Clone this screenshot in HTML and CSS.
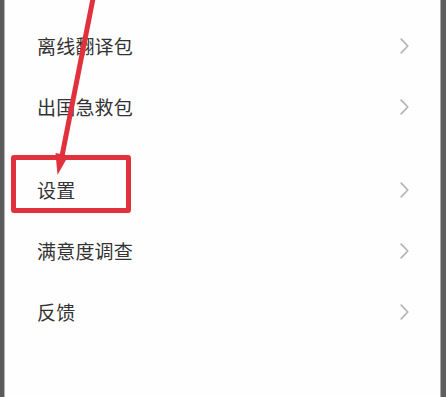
FILE: index.html
```html
<!DOCTYPE html>
<html lang="zh">
<head>
<meta charset="utf-8">
<link rel="stylesheet" href="styles.css">
</head>
<body>
<div class="screen">
  <div class="edge edge-left"></div>
  <main class="menu">
    <ul class="group">
      <li class="row"><span class="label">离线翻译包</span><svg class="chev" viewBox="0 0 9 16"><polyline points="1.2,1.2 7.8,8 1.2,14.8"/></svg></li>
      <li class="row"><span class="label">出国急救包</span><svg class="chev" viewBox="0 0 9 16"><polyline points="1.2,1.2 7.8,8 1.2,14.8"/></svg></li>
    </ul>
    <ul class="group">
      <li class="row"><span class="label">设置</span><svg class="chev" viewBox="0 0 9 16"><polyline points="1.2,1.2 7.8,8 1.2,14.8"/></svg></li>
      <li class="row"><span class="label">满意度调查</span><svg class="chev" viewBox="0 0 9 16"><polyline points="1.2,1.2 7.8,8 1.2,14.8"/></svg></li>
      <li class="row"><span class="label">反馈</span><svg class="chev" viewBox="0 0 9 16"><polyline points="1.2,1.2 7.8,8 1.2,14.8"/></svg></li>
    </ul>
  </main>
  <div class="edge edge-right"></div>
  <div class="highlight"></div>
  <svg class="arrow" viewBox="0 0 446 397" width="446" height="397">
    <line x1="93.5" y1="-4" x2="62" y2="156" />
    <polygon points="57.5,175 55.5,153 68.5,155.5" />
  </svg>
</div>
</body>
</html>
```

FILE: styles.css
```css
html, body {
  margin: 0;
  padding: 0;
  background: #ffffff;
}
.screen {
  position: relative;
  display: flex;
  width: 446px;
  height: 397px;
  overflow: hidden;
  font-family: "Noto Sans CJK SC", "Noto Sans", sans-serif;
}
.edge {
  flex: none;
  height: 100%;
}
.edge-left {
  width: 4px;
  background: #5b5b5b;
  border-right: 1px solid #b4b4b4;
}
.edge-right {
  width: 5px;
  background: #5e5e5e;
  border-left: 1px solid #a8a8a8;
}
.menu {
  flex: 1;
  display: flex;
  flex-direction: column;
  gap: 22px;
  padding-top: 15px;
  background: #fefefe;
}
.group {
  list-style: none;
  margin: 0;
  padding: 0;
}
.row {
  height: 61px;
  display: flex;
  align-items: center;
  justify-content: space-between;
  padding: 0 31px 0 32px;
}
.label {
  font-size: 19px;
  color: #333333;
  letter-spacing: 0.2px;
}
.chev {
  width: 9px;
  height: 16px;
  fill: none;
  stroke: #b3b3b3;
  stroke-width: 1.7;
  stroke-linecap: round;
  stroke-linejoin: round;
}
.highlight {
  position: absolute;
  left: 11px;
  top: 155px;
  width: 110px;
  height: 48px;
  border: 5px solid #e0313d;
  border-radius: 3px;
}
.arrow {
  position: absolute;
  left: 0;
  top: 0;
  pointer-events: none;
}
.arrow line {
  stroke: #e0313d;
  stroke-width: 5;
}
.arrow polygon {
  fill: #e0313d;
}
```
